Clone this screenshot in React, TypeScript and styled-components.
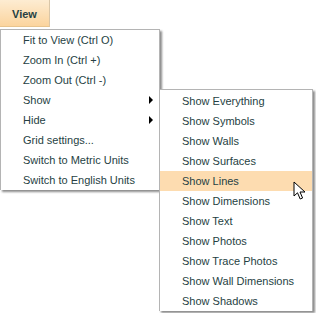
import React from 'react'
import styled, { createGlobalStyle } from 'styled-components'

const mainItems: { label: string; sub?: boolean }[] = [
	{ label: 'Fit to View (Ctrl O)' },
	{ label: 'Zoom In (Ctrl +)' },
	{ label: 'Zoom Out (Ctrl -)' },
	{ label: 'Show', sub: true },
	{ label: 'Hide', sub: true },
	{ label: 'Grid settings...' },
	{ label: 'Switch to Metric Units' },
	{ label: 'Switch to English Units' },
]

const showItems = [
	'Show Everything',
	'Show Symbols',
	'Show Walls',
	'Show Surfaces',
	'Show Lines',
	'Show Dimensions',
	'Show Text',
	'Show Photos',
	'Show Trace Photos',
	'Show Wall Dimensions',
	'Show Shadows',
]

const App: React.FC = () => {
	return (
		<Page>
			<GlobalStyle />
			<MenuButton>View</MenuButton>
			<Menu>
				{mainItems.map(item => (
					<Item key={item.label}>
						<span>{item.label}</span>
						{item.sub && <Arrow />}
					</Item>
				))}
			</Menu>
			<SubMenu>
				{showItems.map(label => (
					<Item key={label} $active={label === 'Show Lines'}>
						<span>{label}</span>
					</Item>
				))}
			</SubMenu>
			<Cursor width="14" height="20" viewBox="0 0 14 20">
				<path
					d="M1 1 L1 15 L4.5 11.8 L7.2 18 L9.6 17 L7 11 L12 11 Z"
					fill="#fff"
					stroke="#000"
					strokeWidth="1"
					strokeLinejoin="round"
				/>
			</Cursor>
		</Page>
	)
}

export default App

const GlobalStyle = createGlobalStyle`
	body {
		margin: 0;
		background: #fff;
		font-family: 'Liberation Sans', Arial, sans-serif;
	}
`

const Page = styled.div`
	position: relative;
	width: 316px;
	height: 313px;
	overflow: hidden;
	background: #fff;
	display: flex;
	flex-direction: column;
	align-items: flex-start;
	gap: 2px;
`

const MenuButton = styled.div`
	width: 50px;
	height: 27px;
	box-sizing: border-box;
	display: flex;
	align-items: center;
	justify-content: center;
	padding-top: 1px;
	font-size: 11px;
	font-weight: bold;
	color: #263f43;
	background: linear-gradient(#fdecd2, #fbd49e);
	border-right: 1px solid #d9c6a8;
	border-bottom: 1px solid #e8c48e;
`

const Menu = styled.div`
	display: flex;
	flex-direction: column;
	width: 160px;
	box-sizing: border-box;
	border: 1px solid #b4b4b4;
	border-bottom: none;
	background: #fff;
	box-shadow: 2px 2px 2px rgba(0, 0, 0, 0.45);
`

const SubMenu = styled(Menu)`
	position: absolute;
	left: 159px;
	top: 89px;
	width: 154px;
	padding-top: 1px;
`

const Item = styled.div<{ $active?: boolean }>`
	height: 20px;
	display: flex;
	align-items: center;
	justify-content: space-between;
	padding: 0 6px 0 22px;
	font-size: 11px;
	color: #263f43;
	white-space: nowrap;
	background: ${({ $active }) => ($active ? '#fddcb0' : 'transparent')};
`

const Arrow = styled.span`
	width: 0;
	height: 0;
	border-top: 4px solid transparent;
	border-bottom: 4px solid transparent;
	border-left: 4px solid #000;
`

const Cursor = styled.svg`
	position: absolute;
	left: 293px;
	top: 181px;
`
